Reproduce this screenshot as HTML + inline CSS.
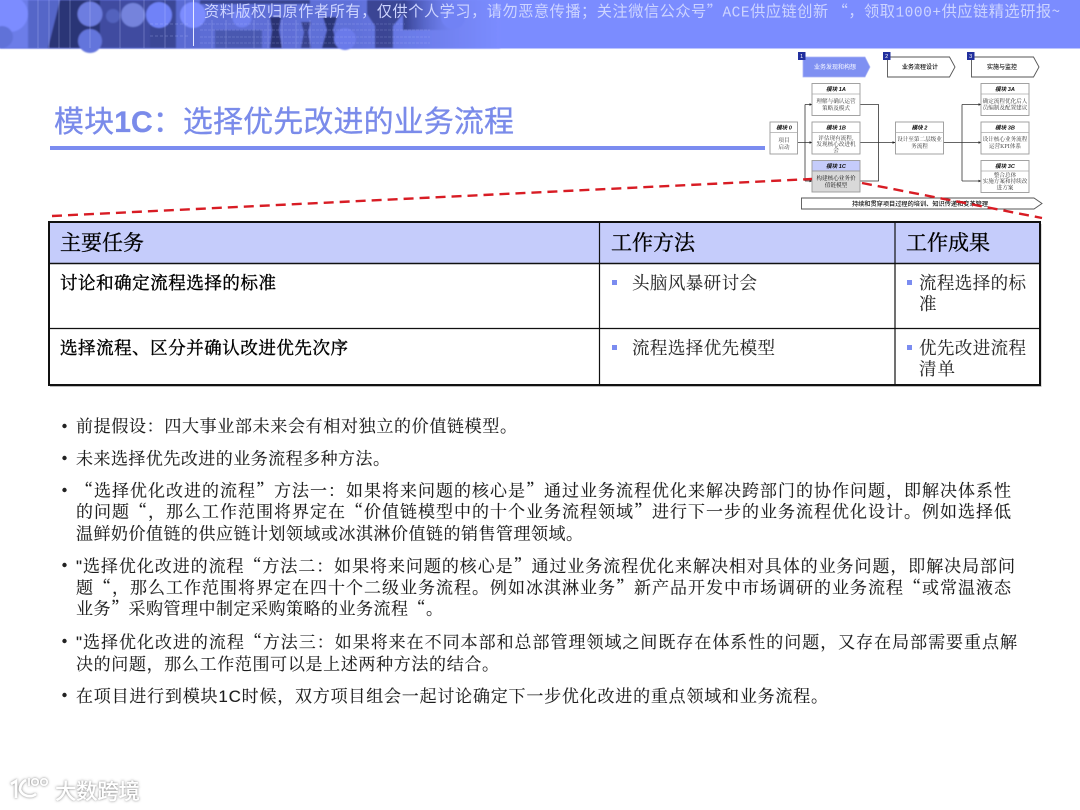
<!DOCTYPE html>
<html lang="zh-CN"><head><meta charset="utf-8"><title>模块1C</title>
<style>
html,body{margin:0;padding:0;background:#fff;width:1080px;height:810px;overflow:hidden}
svg{display:block;filter:blur(.3px)}
.z{font-family:"Noto Serif CJK SC","Liberation Serif",serif}
.b{font-size:17px;fill:#1c1c1c;stroke:#1c1c1c;stroke-width:.12px}
.bd{font-size:17.5px;fill:#000;stroke:#000;stroke-width:.4px}
.h{font-size:21px;fill:#000;stroke:#000;stroke-width:.35px}
.c{font-size:17.5px;fill:#2a2a2a;stroke:#2a2a2a;stroke-width:.1px}
.d{font-family:"Noto Serif CJK SC",serif;font-size:5.6px;fill:#333;text-anchor:middle}
.m{font-family:"Liberation Sans","Noto Sans CJK SC",sans-serif;font-size:5.6px;font-style:italic;font-weight:bold;fill:#111;text-anchor:middle}
.box{fill:#fff;stroke:#999;stroke-width:.9}
.ln{fill:none;stroke:#333;stroke-width:.8}
</style></head><body>
<svg width="1080" height="810" viewBox="0 0 1080 810" xmlns="http://www.w3.org/2000/svg">
<defs>
<linearGradient id="g" x1="0" x2="1" y1="0" y2="0"><stop offset="0" stop-color="#5a6ad0"/><stop offset=".7" stop-color="#5f6fd8"/><stop offset="1" stop-color="#7b8cff"/></linearGradient>
<linearGradient id="f" x1="0" x2="1" y1="0" y2="0"><stop offset="0" stop-color="#2f3a86" stop-opacity=".9"/><stop offset="1" stop-color="#5f6fd8" stop-opacity="0"/></linearGradient>
<filter id="bl"><feGaussianBlur stdDeviation=".8"/></filter>
<filter id="sh" x="-20%" y="-20%" width="140%" height="140%"><feDropShadow dx="0" dy="0" stdDeviation="1.4" flood-color="#666" flood-opacity=".9"/></filter>
</defs>

<!-- banner -->
<rect width="1080" height="48.5" fill="#7b8cff"/>
<g filter="url(#bl)">
<rect width="500" height="48.5" fill="url(#g)"/>
<rect x="0" y="0" width="30" height="48" fill="#6c7de8"/>
<rect x="28" y="0" width="34" height="48" fill="#5566c8"/>
<path d="M60 0H102V48H48z" fill="#2c3576"/>
<path d="M100 0H150V48H100z" fill="#3f4ca0"/>
<path d="M150 0H176V48H150z" fill="#3a4696"/>
<rect x="176" y="0" width="24" height="48" fill="#5a6ad2"/>
<rect x="200" y="0" width="110" height="4" fill="#39448f"/>
<circle cx="10" cy="14" r="18" fill="#7b8cff"/>
<circle cx="2" cy="37" r="11" fill="#6172d8"/>
<circle cx="90" cy="14" r="12.5" fill="#6d7de0"/>
<circle cx="90" cy="41" r="12" fill="#6475dc"/>
<circle cx="113" cy="16" r="7" fill="#5262bd"/>
<circle cx="133" cy="15" r="12" fill="#7483dc"/>
<circle cx="159" cy="15" r="13" fill="#7082f8"/>
<circle cx="193" cy="15" r="13" fill="#7b8cff"/>
<path d="M215 30H262V48H215z" fill="#4a58b0"/>
<circle cx="242" cy="18" r="9.5" fill="#6f80f0"/>
<path d="M270 17H281L279 30L282 48H270L272 30z" fill="#2a3372"/>
<path d="M301 22H311L308 32L311 48H301L304 32z" fill="#37428e"/>
<path d="M323 17H337L333 30L338 48H322L327 30z" fill="#2c3576"/>
<path d="M367 0H403V14L393 26V48H375V26L367 14z" fill="#35408c" opacity=".9"/>
<circle cx="345" cy="39" r="11" fill="#6a7aea"/>
<rect x="403" y="0" width="50" height="30" fill="url(#f)"/>
<circle cx="453" cy="17" r="12" fill="#7182f4"/>
</g>
<g stroke="#c3cbff" stroke-width=".6" opacity=".5" fill="none">
<path d="M38 0V48M49 0V48M59 0V48M70 0V48M90 0V48M120 0V48M144 0V48M165 0V48M185 0V48"/>
<path d="M150 24H190M150 36H190" stroke-dasharray="3 2"/>
</g>
<g stroke="#c3cbff" stroke-width=".6" opacity=".4" fill="none">
<path d="M200 24H405M200 30H430M200 37H430M200 43H430" stroke-dasharray="3 1"/>
<path d="M212 20V48M226 20V48M254 20V48M268 20V48M282 20V48M296 20V48M310 20V48"/>
</g>
<rect x="193" y="0" width="1" height="46" fill="#e8ebff"/>
<text x="204" y="16.5" font-family="'WenQuanYi Zen Hei','Noto Sans CJK SC',sans-serif" font-size="15.2" fill="#cdd4ff" textLength="856" lengthAdjust="spacing">资料版权归原作者所有，仅供个人学习，请勿恶意传播；关注微信公众号”<tspan font-family="'Liberation Mono'" font-size="14.5">ACE</tspan>供应链创新 “，领取<tspan font-family="'Liberation Mono'" font-size="14.5">1000+</tspan>供应链精选研报~</text>

<!-- title -->
<text x="54" y="132" font-family="'Liberation Sans','Noto Sans CJK SC',sans-serif" font-size="30" fill="#7a8bea" stroke="#7a8bea" stroke-width=".3" textLength="460" lengthAdjust="spacing">模块<tspan font-weight="bold">1C</tspan>：选择优先改进的业务流程</text>
<rect x="50" y="146" width="715" height="4" fill="#7b8cf0"/>

<!-- mini diagram -->
<g>
<path d="M803 57H865L870 67L865 77H803z" fill="#7f90f2" stroke="#aab4f5" stroke-width=".8"/>
<path d="M887.5 57H949.5L955 67L949.5 77H887.5z" fill="#fff" stroke="#555" stroke-width=".9"/>
<path d="M971.5 57H1033.5L1039 67L1033.5 77H971.5z" fill="#fff" stroke="#555" stroke-width=".9"/>
<rect x="798" y="52" width="7.5" height="8" fill="#22309e"/><rect x="883" y="52" width="7.5" height="8" fill="#22309e"/><rect x="967" y="52" width="7.5" height="8" fill="#22309e"/>
<g font-family="'Liberation Sans',sans-serif" font-size="5.5" fill="#fff" text-anchor="middle"><text x="801.7" y="58">1</text><text x="886.7" y="58">2</text><text x="970.7" y="58">3</text></g>
<g font-family="'Noto Sans CJK SC',sans-serif" font-size="6" font-weight="500" text-anchor="middle">
<text x="835" y="69" fill="#e4e8ff">业务发现和构想</text>
<text x="920" y="69" fill="#111">业务流程设计</text>
<text x="1002" y="69" fill="#111">实施与监控</text></g>

<!-- connectors -->
<path class="ln" d="M798 142.5H805M805 104.5V181M805 104.5H812M805 142.5H812M805 181H812"/>
<path d="M812.5 104.5l-3-1.3v2.6zM812.5 142.5l-3-1.3v2.6zM812.5 181l-3-1.3v2.6z" fill="#222"/>
<path class="ln" d="M860 104.5H878.5V181H860M860 142.5H895"/>
<path d="M895.5 142.5l-3-1.3v2.6zM981.5 104.5l-3-1.3v2.6zM981.5 142.5l-3-1.3v2.6zM981.5 181l-3-1.3v2.6z" fill="#222"/>
<path class="ln" d="M943.5 142.5H981M962 104.5V181M962 104.5H981M962 181H981"/>

<!-- boxes -->
<rect class="box" x="770" y="122" width="27.5" height="32"/><path class="ln" d="M770 132.5H797.5" style="stroke:#aaa"/>
<rect class="box" x="812" y="83.5" width="48" height="32"/><path style="stroke:#aaa" class="ln" d="M812 94H860"/>
<rect class="box" x="812" y="122" width="48" height="32"/><path style="stroke:#aaa" class="ln" d="M812 132.5H860"/>
<rect x="812" y="160.5" width="48" height="10.5" fill="#c5ccfb" stroke="#999" stroke-width=".9"/><rect x="812" y="171" width="48" height="21" fill="#d9d9d9" stroke="#999" stroke-width=".9"/>
<rect class="box" x="895.5" y="122" width="48" height="32"/><path style="stroke:#aaa" class="ln" d="M895.5 132.5H943.5"/>
<rect class="box" x="981" y="83.5" width="48" height="32"/><path style="stroke:#aaa" class="ln" d="M981 94H1029"/>
<rect class="box" x="981" y="122" width="48" height="32"/><path style="stroke:#aaa" class="ln" d="M981 132.5H1029"/>
<rect class="box" x="981" y="160.5" width="48" height="32"/><path style="stroke:#aaa" class="ln" d="M981 171H1029"/>
<text class="m" x="784" y="129.5">模块 0</text><text class="m" x="836" y="91">模块 1A</text><text class="m" x="836" y="129.5">模块 1B</text><text class="m" x="836" y="168">模块 1C</text><text class="m" x="919.5" y="129.5">模块 2</text><text class="m" x="1005" y="91">模块 3A</text><text class="m" x="1005" y="129.5">模块 3B</text><text class="m" x="1005" y="168">模块 3C</text>
<text class="d" x="784" y="142">项目</text><text class="d" x="784" y="149">启动</text>
<text class="d" x="836" y="103">理解与确认运营</text><text class="d" x="836" y="110">策略及模式</text>
<text class="d" x="836" y="140">评估现有流程,</text><text class="d" x="836" y="146">发现核心改进机</text><text class="d" x="836" y="152">会</text>
<text class="d" x="836" y="180" style="fill:#111">构建核心业务价</text><text class="d" x="836" y="187" style="fill:#111">值链模型</text>
<text class="d" x="919.5" y="141">设计至第二层级业</text><text class="d" x="919.5" y="148">务流程</text>
<text class="d" x="1005" y="103">确定流程优化后人</text><text class="d" x="1005" y="109.5">员编制及配置建议</text>
<text class="d" x="1005" y="141">设计核心业务流程</text><text class="d" x="1005" y="148">运营KPI体系</text>
<text class="d" x="1005" y="177">整合总体</text><text class="d" x="1005" y="183">实施方案和持续改</text><text class="d" x="1005" y="189.5">进方案</text>
<path d="M801.5 198H1034L1042 203.5L1034 209H801.5z" fill="#fff" stroke="#555" stroke-width=".9"/>
<text x="920" y="206" font-family="'Noto Sans CJK SC',sans-serif" font-size="6.2" font-weight="500" fill="#111" text-anchor="middle">持续和贯穿项目过程的培训、知识传递和变革管理</text>
</g>
<path d="M52 216L812 179M862 183L1042 218" fill="none" stroke="#d81c24" stroke-width="2.4" stroke-dasharray="10 6"/>

<!-- table -->
<rect x="50" y="222" width="990" height="41" fill="#c5ccfb"/>
<path d="M50 386.5H1041V224" fill="none" stroke="#bbb" stroke-width="1"/>
<g stroke="#111" fill="none">
<rect x="49" y="222" width="991" height="163" stroke-width="2"/>
<path d="M49 263.5H1040" stroke-width="1.6"/>
<path d="M49 328.5H1040" stroke-width="1.2"/>
<path d="M599.5 222V385M895 222V385" stroke-width="1.2"/>
</g>
<text class="z h" x="60" y="250" textLength="84">主要任务</text>
<text class="z h" x="611" y="250" textLength="84">工作方法</text>
<text class="z h" x="906" y="250" textLength="84">工作成果</text>
<text class="z bd" x="60" y="289" textLength="216">讨论和确定流程选择的标准</text>
<text class="z bd" x="60" y="354" textLength="288">选择流程、区分并确认改进优先次序</text>
<g fill="#7b8cf0"><rect x="612" y="280" width="5" height="5"/><rect x="612" y="345" width="5" height="5"/><rect x="907" y="280" width="5" height="5"/><rect x="907" y="345" width="5" height="5"/></g>
<text class="z c" x="632" y="289" textLength="125">头脑风暴研讨会</text>
<text class="z c" x="632" y="354" textLength="143">流程选择优先模型</text>
<text class="z c" x="919" y="289" textLength="107">流程选择的标</text>
<text class="z c" x="919" y="310">准</text>
<text class="z c" x="919" y="354" textLength="107">优先改进流程</text>
<text class="z c" x="919" y="375" textLength="36">清单</text>

<!-- bullets -->
<g fill="#222"><circle cx="64.5" cy="426" r="2.2"/><circle cx="64.5" cy="458" r="2.2"/><circle cx="64.5" cy="490" r="2.2"/><circle cx="64.5" cy="565" r="2.2"/><circle cx="64.5" cy="641" r="2.2"/><circle cx="64.5" cy="695" r="2.2"/></g>
<g class="z b">
<text x="76" y="432" textLength="441">前提假设：四大事业部未来会有相对独立的价值链模型。</text>
<text x="76" y="464.5" textLength="314">未来选择优先改进的业务流程多种方法。</text>
<text x="76" y="496.5" textLength="935">“选择优化改进的流程”方法一：如果将来问题的核心是”通过业务流程优化来解决跨部门的协作问题，即解决体系性</text>
<text x="76" y="517.5" textLength="935">的问题“，那么工作范围将界定在“价值链模型中的十个业务流程领域”进行下一步的业务流程优化设计。例如选择低</text>
<text x="76" y="539.5" textLength="507">温鲜奶价值链的供应链计划领域或冰淇淋价值链的销售管理领域。</text>
<text x="76" y="572" textLength="939"><tspan font-family="'Liberation Sans'">"</tspan>选择优化改进的流程“方法二：如果将来问题的核心是”通过业务流程优化来解决相对具体的业务问题，即解决局部问</text>
<text x="76" y="593.5" textLength="935">题“，那么工作范围将界定在四十个二级业务流程。例如冰淇淋业务”新产品开发中市场调研的业务流程“或常温液态</text>
<text x="76" y="614.5" textLength="367">业务”采购管理中制定采购策略的业务流程“。</text>
<text x="76" y="648" textLength="941"><tspan font-family="'Liberation Sans'">"</tspan>选择优化改进的流程“方法三：如果将来在不同本部和总部管理领域之间既存在体系性的问题，又存在局部需要重点解</text>
<text x="76" y="670" textLength="423">决的问题，那么工作范围可以是上述两种方法的结合。</text>
<text x="76" y="702" textLength="752">在项目进行到模块<tspan font-family="'Liberation Sans'">1C</tspan>时候，双方项目组会一起讨论确定下一步优化改进的重点领域和业务流程。</text>
</g>

<!-- logo -->
<g filter="url(#sh)">
<path d="M11 784L16 781V798" fill="none" stroke="#fff" stroke-width="2.6"/>
<path d="M36 794A10.5 10.5 0 0 1 20 790A10.5 10.5 0 0 1 26 780" fill="none" stroke="#fff" stroke-width="2.6"/>
<g fill="none" stroke="#fff" stroke-width="1.6"><path d="M29 778V786"/><circle cx="35" cy="782" r="3.2"/><circle cx="44" cy="782" r="3.2"/></g>
<text x="55" y="799" font-family="'Noto Sans CJK SC',sans-serif" font-size="21.5" font-weight="500" fill="#fff" textLength="85">大数跨境</text>
</g>
</svg>
</body></html>
